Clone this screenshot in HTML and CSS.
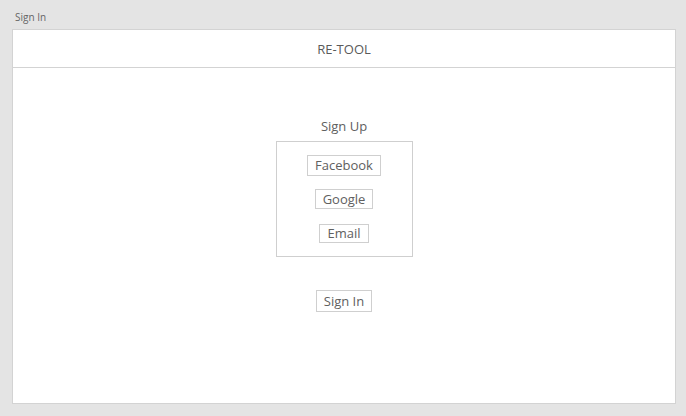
FILE: index.html
```html
<!DOCTYPE html>
<html>
<head>
<meta charset="utf-8">
<link rel="stylesheet" href="styles.css">
</head>
<body>
<div class="page">
  <div class="page-title">Sign In</div>
  <div class="frame">
    <div class="header">RE-TOOL</div>
    <div class="content">
      <div class="signup-label">Sign Up</div>
      <div class="signup-box">
        <button class="btn btn-fb">Facebook</button>
        <button class="btn btn-g">Google</button>
        <button class="btn btn-mail">Email</button>
      </div>
      <button class="btn signin">Sign In</button>
    </div>
  </div>
</div>
</body>
</html>
```

FILE: styles.css
```css
html, body {
  margin: 0;
  padding: 0;
  background: #e4e4e4;
  font-family: "Open Sans", "Noto Sans", "DejaVu Sans", sans-serif;
  color: #606060;
}
.page {
  width: 686px;
  height: 416px;
  box-sizing: border-box;
  padding: 9px 10px 12px 12px;
  display: flex;
  flex-direction: column;
}
.page-title {
  font-size: 10px;
  line-height: 16px;
  height: 20px;
  padding-left: 3px;
  color: #666;
}
.frame {
  flex: 1;
  background: #fff;
  border: 1px solid #d3d3d3;
  display: flex;
  flex-direction: column;
}
.header {
  height: 37px;
  border-bottom: 1px solid #d3d3d3;
  display: flex;
  align-items: center;
  justify-content: center;
  font-size: 13px;
  color: #5a5a5a;
}
.content {
  display: flex;
  flex-direction: column;
  align-items: center;
  padding-top: 49px;
}
.signup-label {
  font-size: 13px;
  line-height: 18px;
  margin-bottom: 6px;
}
.signup-box {
  width: 137px;
  height: 116px;
  border: 1px solid #cfcfcf;
  display: flex;
  flex-direction: column;
  align-items: center;
  padding-top: 13px;
  box-sizing: border-box;
}
.btn {
  font-family: inherit;
  font-size: 13px;
  color: #606060;
  background: #fff;
  border: 1px solid #cfcfcf;
  padding: 0 7px;
  height: 21px;
  line-height: 19px;
  margin: 0;
}
.btn-g {
  margin-top: 13px;
  height: 20px;
  line-height: 18px;
}
.btn-mail {
  margin-top: 15px;
  height: 19px;
  line-height: 17px;
}
.signin {
  margin-top: 33px;
  height: 22px;
  line-height: 20px;
}
```
